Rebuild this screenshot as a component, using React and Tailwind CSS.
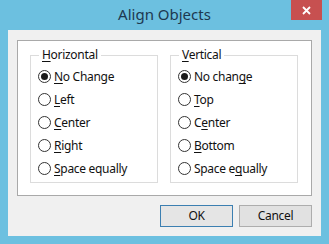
const font = { fontFamily: '"Noto Sans", "Liberation Sans", sans-serif' };

const Radio = ({ checked }) => (
  <span className="relative flex h-[13px] w-[13px] shrink-0 items-center justify-center rounded-full border border-[#333] bg-white">
    {checked && <span className="h-[7px] w-[7px] rounded-full bg-[#1a1a1a]" />}
  </span>
);

// label with one underlined access key at index k
const Label = ({ text, k }) => (
  <span>
    {text.slice(0, k)}
    <span className="underline underline-offset-2 [text-decoration-skip-ink:none]">{text[k]}</span>
    {text.slice(k + 1)}
  </span>
);

const Group = ({ title, tk, items }) => (
  <div className="relative h-[128px] w-[128px] border border-[#dcdcdc]">
    <span className="absolute left-[8px] top-[-9px] bg-white px-[3px] leading-[16px]">
      <Label text={title} k={tk} />
    </span>
    <div className="flex flex-col pl-[7px] pt-[9px]">
      {items.map(([text, k], i) => (
        <div key={text} className="flex h-[23px] items-center gap-[3px]">
          <Radio checked={i === 0} />
          <Label text={text} k={k} />
        </div>
      ))}
    </div>
  </div>
);

export default function App() {
  return (
    <div className="flex h-[244px] w-[329px] flex-col bg-[#6cc0e0] text-[12px] tracking-[-0.3px] text-[#111]" style={font}>
      <div className="relative flex h-[30px] shrink-0 items-center justify-center pb-[1px]">
        <span className="text-[15px] tracking-normal text-[#1d3850]">Align Objects</span>
        <div className="absolute right-[7px] top-0 flex h-[20px] w-[31px] items-center justify-center bg-[#c75050]">
          <svg width="9" height="9" viewBox="0 0 9 9">
            <path d="M1 1 L8 8 M8 1 L1 8" stroke="white" strokeWidth="1.8" />
          </svg>
        </div>
      </div>
      <div className="mx-[8px] flex h-[206px] flex-col bg-[#f0f0f0] px-[9px] pt-[10px]">
        <div className="flex h-[156px] gap-[12px] border border-[#a9a9a9] bg-white pl-[12px] pt-[14px]">
          <Group
            title="Horizontal"
            tk={0}
            items={[["No Change", 0], ["Left", 0], ["Center", 0], ["Right", 0], ["Space equally", 0]]}
          />
          <Group
            title="Vertical"
            tk={0}
            items={[["No change", 7], ["Top", 0], ["Center", 1], ["Bottom", 0], ["Space equally", 7]]}
          />
        </div>
        <div className="mt-[9px] flex justify-end gap-[6px]">
          <button className="h-[22px] w-[73px] border border-[#3c7fb1] bg-[#e5e5e5]">OK</button>
          <button className="h-[22px] w-[73px] border border-[#adadad] bg-[#e1e1e1]">Cancel</button>
        </div>
      </div>
    </div>
  );
}
